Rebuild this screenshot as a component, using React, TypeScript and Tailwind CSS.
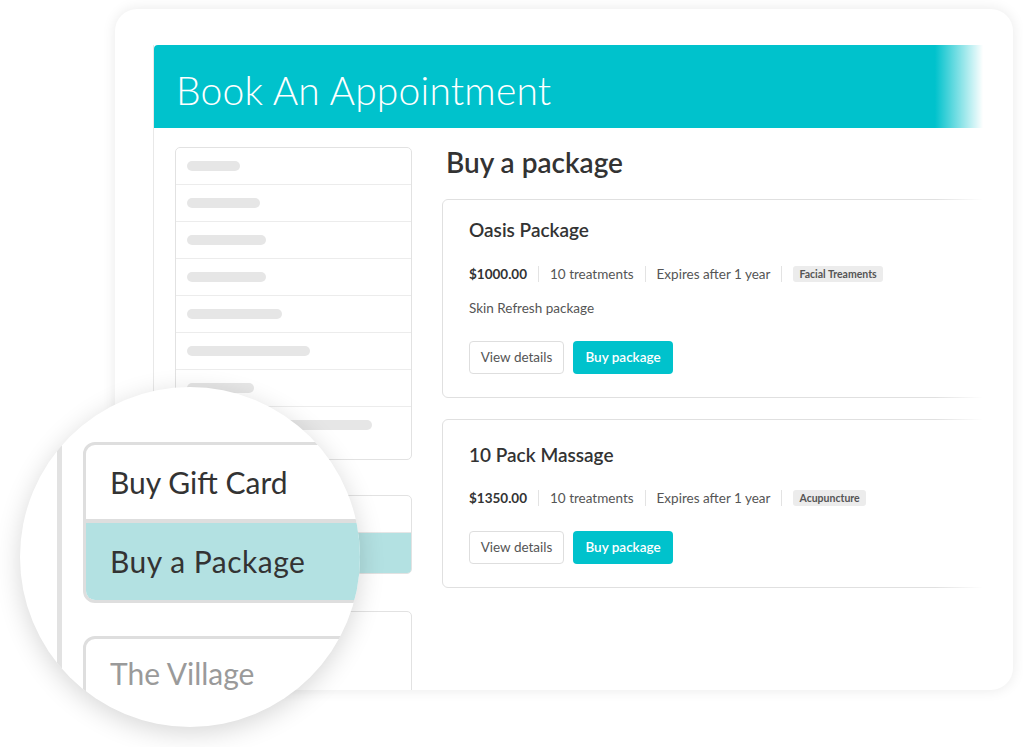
import React from "react";

const skeletonBars = [53, 73, 79, 79, 95, 123, 67];

function Sep() {
  return <span className="mx-[11px] h-[16px] w-px bg-[#e3e3e3]" />;
}

function PackageCard({
  title,
  price,
  badge,
  description,
  topPad,
}: {
  title: string;
  price: string;
  badge: string;
  description?: string;
  topPad: "a" | "b";
}) {
  return (
    <div
      className={`w-[600px] rounded-[6px] border-[1.5px] border-[#e0e0e0] bg-white pl-[26px] pb-[23px] ${
        topPad === "a" ? "pt-[18px]" : "pt-[23px]"
      }`}
    >
      <div className="h-[24px] text-[19px] leading-[24px] font-semibold text-[#333]">{title}</div>
      <div
        className={`flex h-[20px] items-center text-[13.5px] text-[#555] ${
          topPad === "a" ? "mt-[22px]" : "mt-[21px]"
        }`}
      >
        <span className="font-bold text-[#333]">{price}</span>
        <Sep />
        <span>10 treatments</span>
        <Sep />
        <span>Expires after 1 year</span>
        <Sep />
        <span className="rounded-[3px] bg-[#ececec] px-[6px] text-[10.5px] leading-[16px] font-bold text-[#555]">
          {badge}
        </span>
      </div>
      {description && (
        <div className="mt-[14px] h-[20px] text-[13.5px] leading-[20px] text-[#555]">{description}</div>
      )}
      <div className="mt-[23px] flex gap-[9px]">
        <button className="h-[33px] w-[95px] rounded-[4px] border-[1.5px] border-[#dedede] bg-white text-[13.5px] text-[#555]">
          View details
        </button>
        <button className="h-[33px] w-[100px] rounded-[4px] bg-[#00c2cc] text-[13.5px] font-semibold text-white">
          Buy package
        </button>
      </div>
    </div>
  );
}

export default function App() {
  return (
    <div className="relative h-[747px] w-[1023px] overflow-hidden bg-white font-['Lato',sans-serif]">
      {/* browser-ish frame */}
      <div className="ml-[115px] mt-[9px] h-[681px] w-[898px] overflow-hidden rounded-[22px] bg-white pl-[38px] pt-[36px] shadow-[0_0_14px_rgba(0,0,0,0.09)]">
        <div className="relative h-[645px] w-[830px] overflow-hidden border-l-[1.5px] border-[#e8e8e8]">
          <div className="flex h-[83px] items-center rounded-tl-[4px] bg-[#00c2cc] pl-[22px] pt-[8px]">
            <h1 className="text-[39px] font-light tracking-[0.2px] text-white">Book An Appointment</h1>
          </div>

          <div className="flex">
            {/* sidebar */}
            <div className="ml-[21px] w-[237px] shrink-0 pt-[19px]">
              <div className="rounded-[5px] border-[1.5px] border-[#e2e2e2]">
                {skeletonBars.map((w, i) => (
                  <div key={i} className="flex h-[37px] items-center border-b-[1.5px] border-[#ececec] pl-[11px]">
                    <div className="h-[10px] rounded-full bg-[#e6e6e6]" style={{ width: w }} />
                  </div>
                ))}
                <div className="h-[52px] pl-[11px] pt-[13px]">
                  <div className="h-[10px] w-[185px] rounded-full bg-[#e6e6e6]" />
                </div>
              </div>

              <div className="mt-[35px] overflow-hidden rounded-[5px] border-[1.5px] border-[#e2e2e2]">
                <div className="h-[37px] border-b-[1.5px] border-[#e6e6e6]" />
                <div className="h-[40px] bg-[#b3e1e2]" />
              </div>

              <div className="mt-[37px] h-[120px] rounded-[5px] border-[1.5px] border-[#e2e2e2]" />
            </div>

            {/* main */}
            <div className="ml-[30px] min-w-0 flex-1 pt-[18px]">
              <h2 className="h-[32px] pl-[4px] text-[28px] leading-[32px] font-semibold text-[#333]">Buy a package</h2>
              <div className="mt-[21px] flex flex-col gap-[21px]">
                <PackageCard
                  title="Oasis Package"
                  price="$1000.00"
                  badge="Facial Treaments"
                  description="Skin Refresh package"
                  topPad="a"
                />
                <PackageCard title="10 Pack Massage" price="$1350.00" badge="Acupuncture" topPad="b" />
              </div>
            </div>
          </div>

          {/* right-edge fade */}
          <div className="absolute right-0 top-0 h-full w-[48px] bg-gradient-to-r from-white/0 to-white" />
        </div>
      </div>

      {/* magnifier */}
      <div className="absolute left-[20px] top-[387px] flex h-[340px] w-[340px] overflow-hidden rounded-full bg-white shadow-[0_6px_26px_rgba(0,0,0,0.16)]">
        <div className="ml-[37px] w-[5px] shrink-0 bg-[#e2e2e2]" />
        <div className="ml-[21px] mt-[55px] w-[420px] shrink-0">
          <div className="overflow-hidden rounded-[12px] border-[3px] border-[#dedede]">
            <div className="flex h-[74px] items-center pl-[24px] text-[30px] text-[#333]">Buy Gift Card</div>
            <div className="h-[4px] bg-[#dedede]" />
            <div className="flex h-[77px] items-center bg-[#b3e1e2] pl-[24px] text-[30px] tracking-[0.5px] text-[#333]">
              Buy a Package
            </div>
          </div>
          <div className="mt-[33px] h-[120px] rounded-[12px] border-[3px] border-[#dedede] pl-[24px] pt-[12px] text-[30px] text-[#9a9a9a]">
            The Village
          </div>
        </div>
      </div>
    </div>
  );
}
